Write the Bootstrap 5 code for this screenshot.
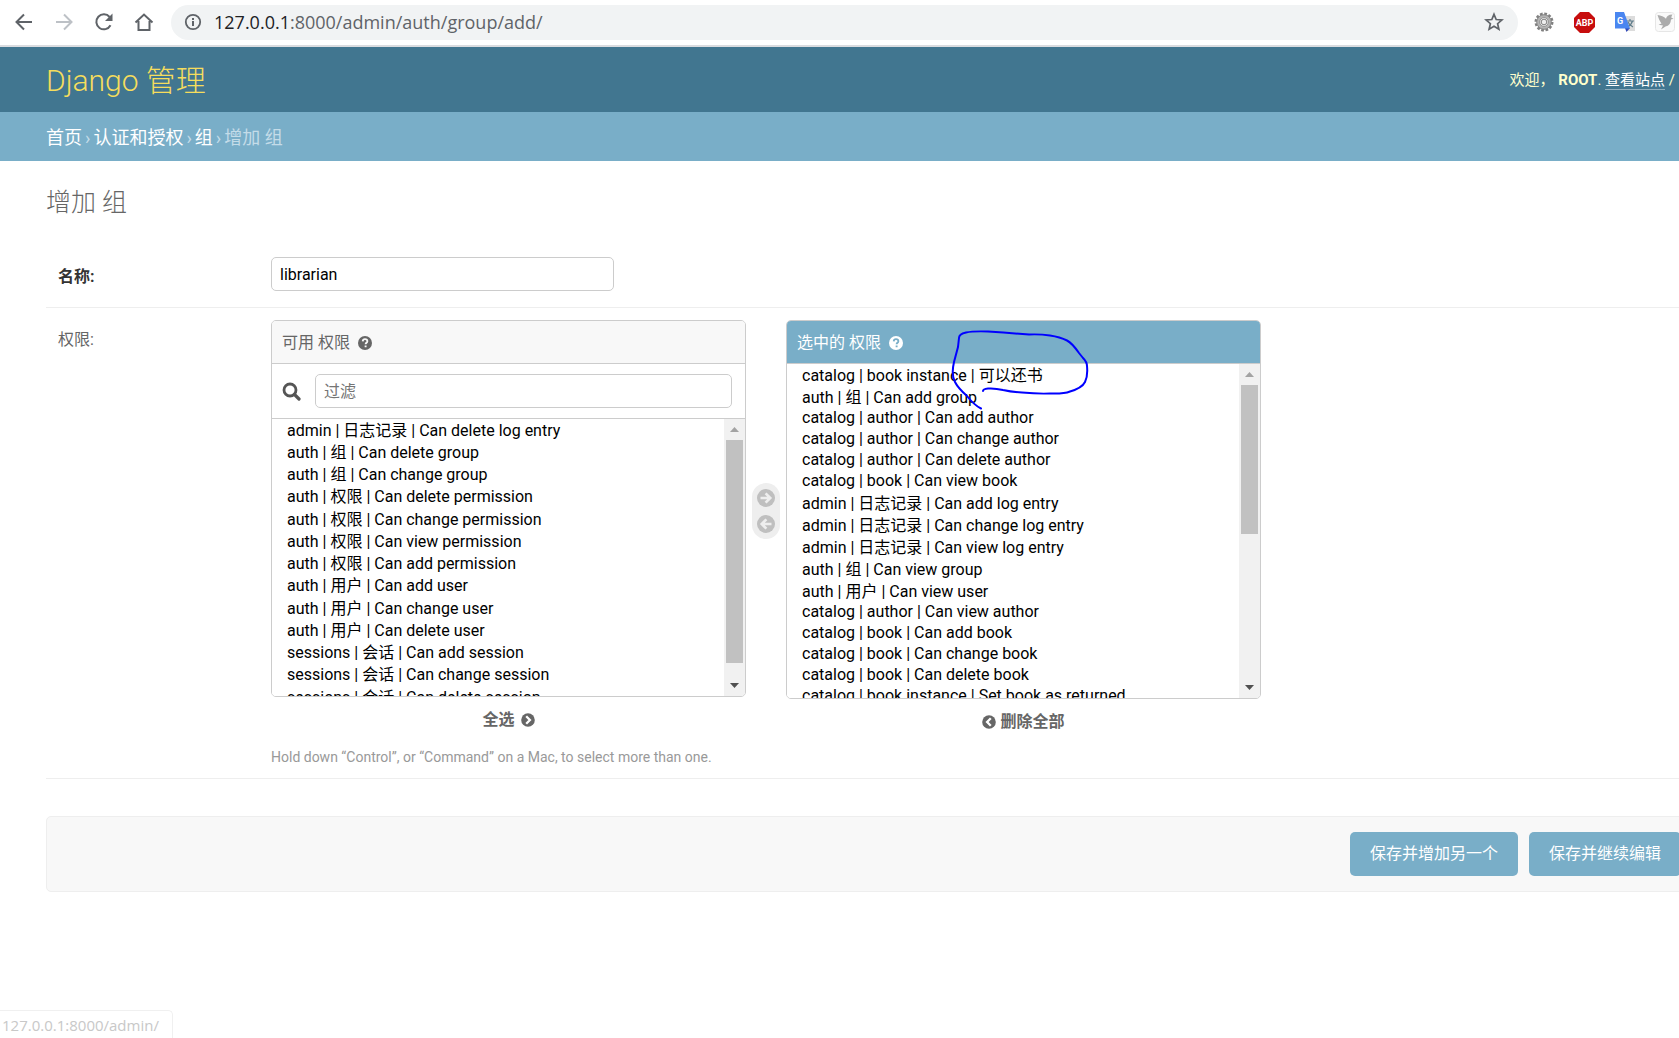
<!DOCTYPE html>
<html lang="zh-CN">
<head>
<meta charset="utf-8">
<meta name="viewport" content="width=device-width, initial-scale=1">
<title>增加 组 | Django 站点管理员</title>
<link href="https://cdn.jsdelivr.net/npm/bootstrap@5.3.0/dist/css/bootstrap.min.css" rel="stylesheet">
<style>
:root { --dj-dark:#417690; --dj-blue:#79aec8; --dj-line:#eee; --dj-border:#ccc; --dj-grey:#666; }
body { font-family: Roboto, "Noto Sans CJK SC", sans-serif; font-size:16px; line-height:24px; color:#333; background:#fff; min-height:100vh; overflow-x:hidden; }
.browser-bar { height:47px; border-bottom:2px solid #dadce0; padding:4px 4px 5px 14px; }
.browser-bar button { width:20px; height:20px; }
.browser-bar svg, .picker svg { display:block; }
.nav-buttons { gap:20px; margin-right:17px; }
.address { height:35px; border-radius:18px; background:#f1f3f4; padding:0 14px 0 13px; font-family:"Open Sans","Noto Sans",sans-serif; font-size:18px; color:#5f6368; }
.address b { font-weight:400; color:#202124; }
.extensions { gap:20px; margin-left:16px; }
.bare { border:0; background:none; padding:0; }
.site-head { background:var(--dj-dark); height:65px; padding:0 4px 0 46px; color:#ffc; font-size:15px; }
.site-name { font-size:30px; line-height:40px; font-weight:300; color:#f5dd5d; text-decoration:none; padding-top:2px; }
.site-head a.view-site { color:#fff; text-decoration:none; border-bottom:1px solid rgba(255,255,255,.4); }
.crumbs { background:var(--dj-blue); height:49px; padding:2px 46px 0; font-size:18px; color:#c4dce8; gap:3px; }
.crumbs a { color:#fff; text-decoration:none; }
.page { padding:25px 0 0 46px; }
.page h1 { font-size:25px; line-height:34px; font-weight:300; color:var(--dj-grey); margin:0 0 37px; }
.form-line { border-bottom:1px solid var(--dj-line); padding:0 12px; }
.form-line.name-line { padding-bottom:16px; }
.form-line.perm-line { padding-top:12px; }
.line-label { width:213px; flex:none; color:var(--dj-grey); padding-top:8px; }
.line-label.required { color:#333; font-weight:700; }
.line-input { border:1px solid var(--dj-border); border-radius:5px; height:34px; padding:0 8px; color:#000; background:#fff; }
.line-input::placeholder { color:#757575; }
.name-input { width:343px; }
.picker { width:475px; }
.picker-box { border:1px solid var(--dj-border); border-radius:5px; overflow:hidden; }
.picker h2 { font-size:16px; line-height:24px; font-weight:400; margin:0; height:43px; padding:2px 10px 0; gap:8px; color:var(--dj-grey); background:#f8f8f8; border-bottom:1px solid var(--dj-border); }
.picker.chosen h2 { background:var(--dj-blue); color:#fff; }
.filter-row { height:55px; padding:0 13px 0 10px; gap:14px; border-bottom:1px solid var(--dj-border); color:#555; }
.picker select { display:block; flex:1; min-width:0; border:0; border-radius:0; padding:0 0 0 13px; background:#fff; color:#000; font-size:16px; outline:0; scrollbar-width:none; }
.picker select::-webkit-scrollbar { display:none; }
.available select { height:277px; }
.chosen select { height:334px; }
.picker option { padding:0 2px 1px; height:21px; }
.picker option.han { height:24px; margin-top:-2px; }
.available option.han:nth-child(4n) { height:25px; }
.scroll-rail { width:21px; background:#f1f1f1; padding:0 2px; }
.scroll-rail svg { width:9px; height:5px; margin:8px auto; flex:none; }
.scroll-thumb { background:#c1c1c1; }
.all-link { font-weight:700; color:var(--dj-grey); text-decoration:none; gap:6px; margin-top:11px; }
.chosen .all-link { gap:4px; }
.movers { background:#eee; border-radius:14px; width:28px; height:56px; margin:163px 6px 0; gap:8px; }
.hint { font-size:14px; line-height:20px; color:#999; margin:13px 0 11px; }
.pen-mark { left:160px; top:5px; pointer-events:none; }
.actions { margin-top:37px; margin-right:-20px; border:1px solid var(--dj-line); border-radius:5px; background:#f8f8f8; padding:15px 17px; gap:11px; }
.actions .btn { background:var(--dj-blue); color:#fff; border:0; border-radius:5px; height:44px; padding:0 20px; font-size:16px; }
.status-bubble { left:0; bottom:0; width:173px; height:28px; border:1px solid #f0f0f0; border-width:1px 1px 0 0; border-radius:0 5px 0 0; padding-left:2px; background:#fff; color:#c8c8c8; font-family:"Open Sans","Noto Sans",sans-serif; font-size:15px; line-height:28px; }
</style>
</head>
<body class="position-relative">
<svg class="d-none">
  <symbol id="help" viewBox="0 0 16 16"><circle cx="8" cy="8" r="8" fill="currentColor"/><path d="M5.4 6.1C5.5 4.3 6.600 3.600 8 3.600c1.500 0 2.700.9 2.700 2.300 0 1.800-2 1.900-2 3.500" fill="none" stroke="var(--hole)" stroke-width="2.100"/><path d="M7.600 10.800h2.200v2.100H7.600z" fill="var(--hole)"/></symbol>
  <symbol id="arrow" viewBox="0 0 18 18"><circle cx="9" cy="9" r="9" fill="#bfbfbf"/><path d="M3.500 9h9M8.600 4.300L13.300 9l-4.700 4.700" fill="none" stroke="#eee" stroke-width="2.600"/></symbol>
  <symbol id="chev" viewBox="0 0 14 14"><circle cx="7" cy="7" r="6.800" fill="currentColor"/><path d="M5.200 3.300L8.900 7l-3.700 3.700" fill="none" stroke="#fff" stroke-width="2.300"/></symbol>
</svg>

<div class="browser-bar d-flex align-items-center">
  <div class="nav-buttons d-flex">
    <button class="bare" aria-label="后退"><svg width="20" height="20" fill="none" stroke="#5f6368" stroke-width="2"><path d="M18 10H3M10 2.500L2.500 10l7.500 7.500"/></svg></button>
    <button class="bare" aria-label="前进"><svg width="20" height="20" fill="none" stroke="#bdc1c6" stroke-width="2"><path d="M2 10h15M10 2.500l7.500 7.500-7.500 7.500"/></svg></button>
    <button class="bare" aria-label="刷新"><svg width="20" height="20"><path d="M16.500 13.300A7.500 7.500 0 1 1 15.600 5" fill="none" stroke="#5f6368" stroke-width="2"/><path d="M18.500 1.500V9H11z" fill="#5f6368"/></svg></button>
    <button class="bare" aria-label="主页"><svg width="20" height="20" fill="none" stroke="#5f6368" stroke-width="2"><path d="M1.500 10.500L10 2.500l8.500 8M4.500 9v9h11V9"/></svg></button>
  </div>
  <div class="address d-flex align-items-center flex-grow-1">
    <svg width="18" height="18" class="me-2"><circle cx="9" cy="9" r="7.200" fill="none" stroke="#5f6368" stroke-width="1.800"/><path d="M8 8h2v5H8zM8 5h2v2H8z" fill="#5f6368"/></svg>
    <span class="ps-1 flex-grow-1"><b>127.0.0.1</b>:8000/admin/auth/group/add/</span>
    <button class="bare" aria-label="收藏"><svg width="20" height="20"><path d="M10 2.300l2.200 5.200 5.700.5-4.300 3.700 1.300 5.500L10 14.300l-4.900 2.900 1.300-5.500L2.100 8l5.700-.5z" fill="none" stroke="#5f6368" stroke-width="1.700"/></svg></button>
  </div>
  <div class="extensions d-flex align-items-center">
    <svg width="20" height="20" viewBox="0 0 20 20"><circle cx="10" cy="10" r="8.200" fill="none" stroke="#808080" stroke-width="2.600" stroke-dasharray="2.700 1.594"/><circle cx="10" cy="10" r="5.700" fill="none" stroke="#b4b4b4" stroke-width="3.600"/><circle cx="10" cy="10" r="7.300" fill="none" stroke="#777" stroke-width=".8"/><circle cx="10" cy="10" r="4.300" fill="none" stroke="#8a8a8a" stroke-width=".8"/><circle cx="10" cy="10" r="2.800" fill="#eee" stroke="#808080"/></svg>
    <svg width="21" height="21" viewBox="0 0 21 21"><path d="M6 0h9l6 6v9l-6 6H6l-6-6V6z" fill="#c70d0d"/><text x="10.500" y="14" text-anchor="middle" font-size="9" font-weight="700" fill="#fff">ABP</text></svg>
    <svg width="20" height="20" viewBox="0 0 20 20"><path d="M8 4h12v15H11z" fill="#dcdcdc"/><path d="M11 9h8M15 7v2M17.500 9c-.8 3-2.500 4.500-5 6M13 10c1 2.500 3 4 5 5" fill="none" stroke="#607d8b" stroke-width="1.200"/><path d="M10 16h5l-3.500 4z" fill="#3048b8"/><path d="M0 0h9l6 16.500H0z" fill="#4a86f0"/><text x="2" y="11.500" font-size="9" font-weight="700" fill="#fff">G</text></svg>
    <svg width="20" height="20" viewBox="0 0 20 20"><rect x=".5" y=".5" width="19" height="19" rx="3" fill="#fafafa" stroke="#e6e6e6"/><path d="M2.500 3c3.500.5 6.500 1.500 8.500 3.700C11.500 4 13.500 2.700 17.500 2.500c-.8 1-.8 2-1.300 3l2.300 1.200-2.500.8c-.3 4-2 6.300-5.500 7L6 17.500l2-4-4.500-.7 3-1.300C4.500 9 3.500 6 2.500 3z" fill="#ababab"/></svg>
  </div>
</div>

<header class="site-head d-flex justify-content-between align-items-center">
  <a class="site-name" href="#">Django 管理</a>
  <div class="text-nowrap">欢迎， <strong>ROOT</strong>. <a class="view-site" href="#">查看站点</a> /</div>
</header>
<nav class="crumbs d-flex align-items-center" aria-label="路径">
  <a href="#">首页</a><span>›</span><a href="#">认证和授权</a><span>›</span><a href="#">组</a><span>›</span><span>增加 组</span>
</nav>

<main class="page">
  <h1>增加 组</h1>
  <form>
    <div class="form-line name-line d-flex">
      <label class="line-label required" for="name">名称:</label>
      <input id="name" class="line-input name-input" type="text" value="librarian">
    </div>
    <div class="form-line perm-line d-flex">
      <label class="line-label" for="perms-from">权限:</label>
      <div>
        <div class="d-flex align-items-start">
          <div class="picker available">
            <div class="picker-box">
              <h2 class="d-flex align-items-center">可用 权限 <svg width="14" height="14" style="--hole:#f8f8f8"><use href="#help"/></svg></h2>
              <div class="filter-row d-flex align-items-center">
                <label for="filter" aria-label="过滤"><svg width="19" height="19"><circle cx="8" cy="8" r="6" fill="none" stroke="currentColor" stroke-width="2.800"/><path d="M12.500 12.500l4.500 4.500" stroke="currentColor" stroke-width="3.200" stroke-linecap="round"/></svg></label>
                <input id="filter" class="line-input flex-grow-1" type="text" placeholder="过滤">
              </div>
              <div class="d-flex">
                <select id="perms-from" multiple>
                  <option class="han">admin | 日志记录 | Can delete log entry</option>
                  <option class="han">auth | 组 | Can delete group</option>
                  <option class="han">auth | 组 | Can change group</option>
                  <option class="han">auth | 权限 | Can delete permission</option>
                  <option class="han">auth | 权限 | Can change permission</option>
                  <option class="han">auth | 权限 | Can view permission</option>
                  <option class="han">auth | 权限 | Can add permission</option>
                  <option class="han">auth | 用户 | Can add user</option>
                  <option class="han">auth | 用户 | Can change user</option>
                  <option class="han">auth | 用户 | Can delete user</option>
                  <option class="han">sessions | 会话 | Can add session</option>
                  <option class="han">sessions | 会话 | Can change session</option>
                  <option class="han">sessions | 会话 | Can delete session</option>
                </select>
                <div class="scroll-rail d-flex flex-column" aria-hidden="true">
                  <svg viewBox="0 0 9 5"><path d="M0 5L4.500 0L9 5z" fill="#a3a3a3"/></svg>
                  <div class="flex-grow-1"><div class="scroll-thumb" style="height:95%"></div></div>
                  <svg viewBox="0 0 9 5"><path d="M0 0L4.500 5L9 0z" fill="#505050"/></svg>
                </div>
              </div>
            </div>
            <a class="all-link d-flex justify-content-center align-items-center" href="#">全选 <svg width="14" height="14"><use href="#chev"/></svg></a>
          </div>
          <div class="movers d-flex flex-column align-items-center justify-content-center">
            <button type="button" class="bare" aria-label="选择"><svg class="d-block" width="18" height="18"><use href="#arrow"/></svg></button>
            <button type="button" class="bare" aria-label="删除"><svg class="d-block" width="18" height="18"><use href="#arrow" transform="rotate(180 9 9)"/></svg></button>
          </div>
          <div class="picker chosen position-relative">
            <div class="picker-box">
              <h2 class="d-flex align-items-center">选中的 权限 <svg width="14" height="14" style="--hole:#79aec8"><use href="#help"/></svg></h2>
              <div class="d-flex">
                <select id="perms-to" multiple aria-label="选中的 权限">
                  <option class="han">catalog | book instance | 可以还书</option>
                  <option class="han">auth | 组 | Can add group</option>
                  <option>catalog | author | Can add author</option>
                  <option>catalog | author | Can change author</option>
                  <option>catalog | author | Can delete author</option>
                  <option>catalog | book | Can view book</option>
                  <option class="han">admin | 日志记录 | Can add log entry</option>
                  <option class="han">admin | 日志记录 | Can change log entry</option>
                  <option class="han">admin | 日志记录 | Can view log entry</option>
                  <option class="han">auth | 组 | Can view group</option>
                  <option class="han">auth | 用户 | Can view user</option>
                  <option>catalog | author | Can view author</option>
                  <option>catalog | book | Can add book</option>
                  <option>catalog | book | Can change book</option>
                  <option>catalog | book | Can delete book</option>
                  <option>catalog | book instance | Set book as returned</option>
                </select>
                <div class="scroll-rail d-flex flex-column" aria-hidden="true">
                  <svg viewBox="0 0 9 5"><path d="M0 5L4.500 0L9 5z" fill="#a3a3a3"/></svg>
                  <div class="flex-grow-1"><div class="scroll-thumb" style="height:51%"></div></div>
                  <svg viewBox="0 0 9 5"><path d="M0 0L4.500 5L9 0z" fill="#505050"/></svg>
                </div>
              </div>
            </div>
            <a class="all-link d-flex justify-content-center align-items-center" href="#"><svg width="14" height="14"><use href="#chev" transform="rotate(180 7 7)"/></svg> 删除全部</a>
            <svg class="pen-mark position-absolute" width="150" height="90" viewBox="946 325 150 90" fill="none" stroke="#00f" stroke-width="2" stroke-linecap="round" stroke-linejoin="round"><path d="M983 391Q983 389 988 388.500Q995 388 1003 390Q1012 392 1022 392.500Q1038 394 1050 393.500Q1064 394 1070 391.500Q1082 388 1085 382Q1088 376 1087 366Q1087 362 1083 358L1079 353Q1072 343 1067 340.500Q1060 337 1050 335.500Q1040 334 1029 334.500Q1010 333 988 331.500Q973 331 966 332.500Q959 334 959 338L958 347L954 362Q951 375 955 382Q958 388 967 396Q974 405 981 408.500"/></svg>
          </div>
        </div>
        <p class="hint">Hold down “Control”, or “Command” on a Mac, to select more than one.</p>
      </div>
    </div>
    <div class="actions d-flex justify-content-end">
      <button type="button" class="btn">保存并增加另一个</button>
      <button type="button" class="btn">保存并继续编辑</button>
    </div>
  </form>
</main>
<div class="status-bubble position-absolute">127.0.0.1:8000/admin/</div>
<script src="https://cdn.jsdelivr.net/npm/bootstrap@5.3.0/dist/js/bootstrap.bundle.min.js"></script>
</body>
</html>
